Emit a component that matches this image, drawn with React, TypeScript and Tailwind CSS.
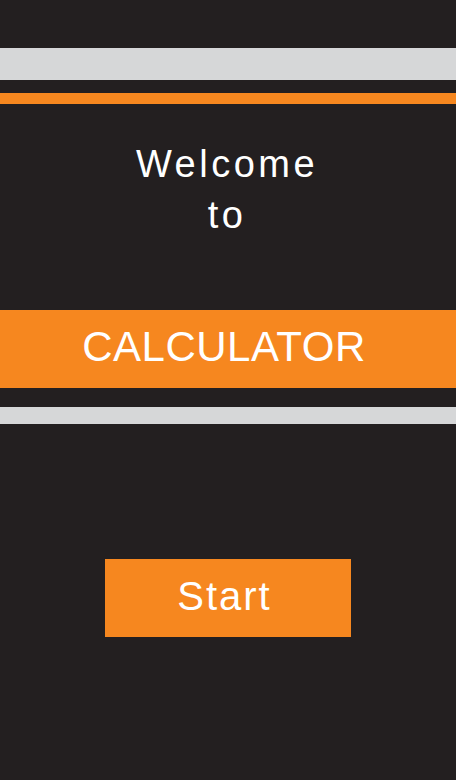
export default function App() {
  return (
    <div
      className="w-[456px] h-[780px] bg-[#231f20] flex flex-col items-stretch overflow-hidden"
      style={{ fontFamily: '"Liberation Sans", Arial, Helvetica, sans-serif' }}
    >
      <div className="mt-[48px] h-[32px] bg-[#d6d7d8]" />
      <div className="mt-[13px] h-[11px] bg-[#f6871f]" />
      <div className="mt-[35px] flex flex-col items-center text-white text-[38px] leading-[51px] tracking-[3.5px] pr-[2px]">
        <span>Welcome</span>
        <span>to</span>
      </div>
      <div className="mt-[69px] h-[78px] bg-[#f6871f] flex items-center justify-center pb-[5px] pr-[8px]">
        <span className="text-white text-[42px] leading-none tracking-[0.5px]">CALCULATOR</span>
      </div>
      <div className="mt-[19px] h-[17px] bg-[#d6d7d8]" />
      <div className="mt-[135px] flex justify-center">
        <div className="w-[246px] h-[78px] bg-[#f6871f] flex items-center justify-center pb-[4px] pr-[7px]">
          <span className="text-white text-[40px] leading-none tracking-[2px]">Start</span>
        </div>
      </div>
    </div>
  );
}
